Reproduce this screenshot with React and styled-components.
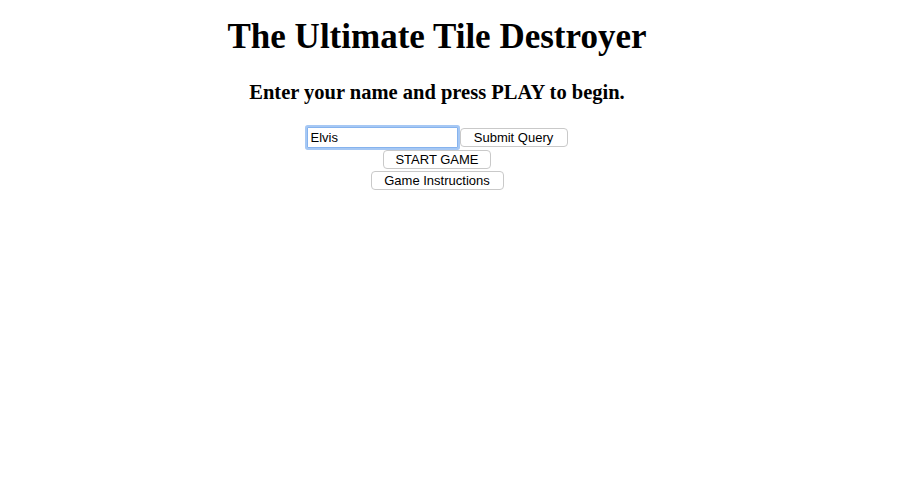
import React from 'react'
import styled, { createGlobalStyle } from 'styled-components'

const Global = createGlobalStyle`
  body {
    margin: 8px;
    background: #fff;
    font-family: "Liberation Serif", "Times New Roman", serif;
    color: #000;
  }
`

const Page = styled.div`
  width: 858px;
  display: flex;
  flex-direction: column;
  align-items: center;
`

const Title = styled.h1`
  font-size: 35px;
  font-weight: bold;
  margin: 8px 0 0;
  line-height: 42px;
`

const Subtitle = styled.h3`
  font-size: 20.5px;
  font-weight: bold;
  margin: 22px 0 0;
  line-height: 24px;
`

const NameForm = styled.form`
  display: flex;
  align-items: center;
  gap: 2px;
  margin-top: 23px;
`

const NameInput = styled.input`
  box-sizing: border-box;
  width: 151px;
  height: 21px;
  padding: 0 3px;
  border: 1px solid #86b3ee;
  border-radius: 1px;
  box-shadow: 0 0 0 2px #a6c8f4;
  outline: none;
  font-family: "Liberation Sans", Arial, sans-serif;
  font-size: 13px;
  color: #000;
`

const Button = styled.button`
  box-sizing: border-box;
  height: 19px;
  width: ${p => p.$w}px;
  padding: 0;
  margin-top: ${p => p.$top || 0}px;
  background: #fff;
  border: 1px solid #c9c9c9;
  border-radius: 4px;
  font-family: "Liberation Sans", Arial, sans-serif;
  font-size: 13px;
  line-height: 17px;
  color: #000;
`

export default function App() {
  return (
    <>
      <Global />
      <Page>
        <Title>The Ultimate Tile Destroyer</Title>
        <Subtitle>Enter your name and press PLAY to begin.</Subtitle>
        <NameForm onSubmit={e => e.preventDefault()}>
          <NameInput type="text" defaultValue="Elvis" />
          <Button type="submit" $w={108}>Submit Query</Button>
        </NameForm>
        <Button $w={108} $top={2}>START GAME</Button>
        <Button $w={133} $top={2}>Game Instructions</Button>
      </Page>
    </>
  )
}
